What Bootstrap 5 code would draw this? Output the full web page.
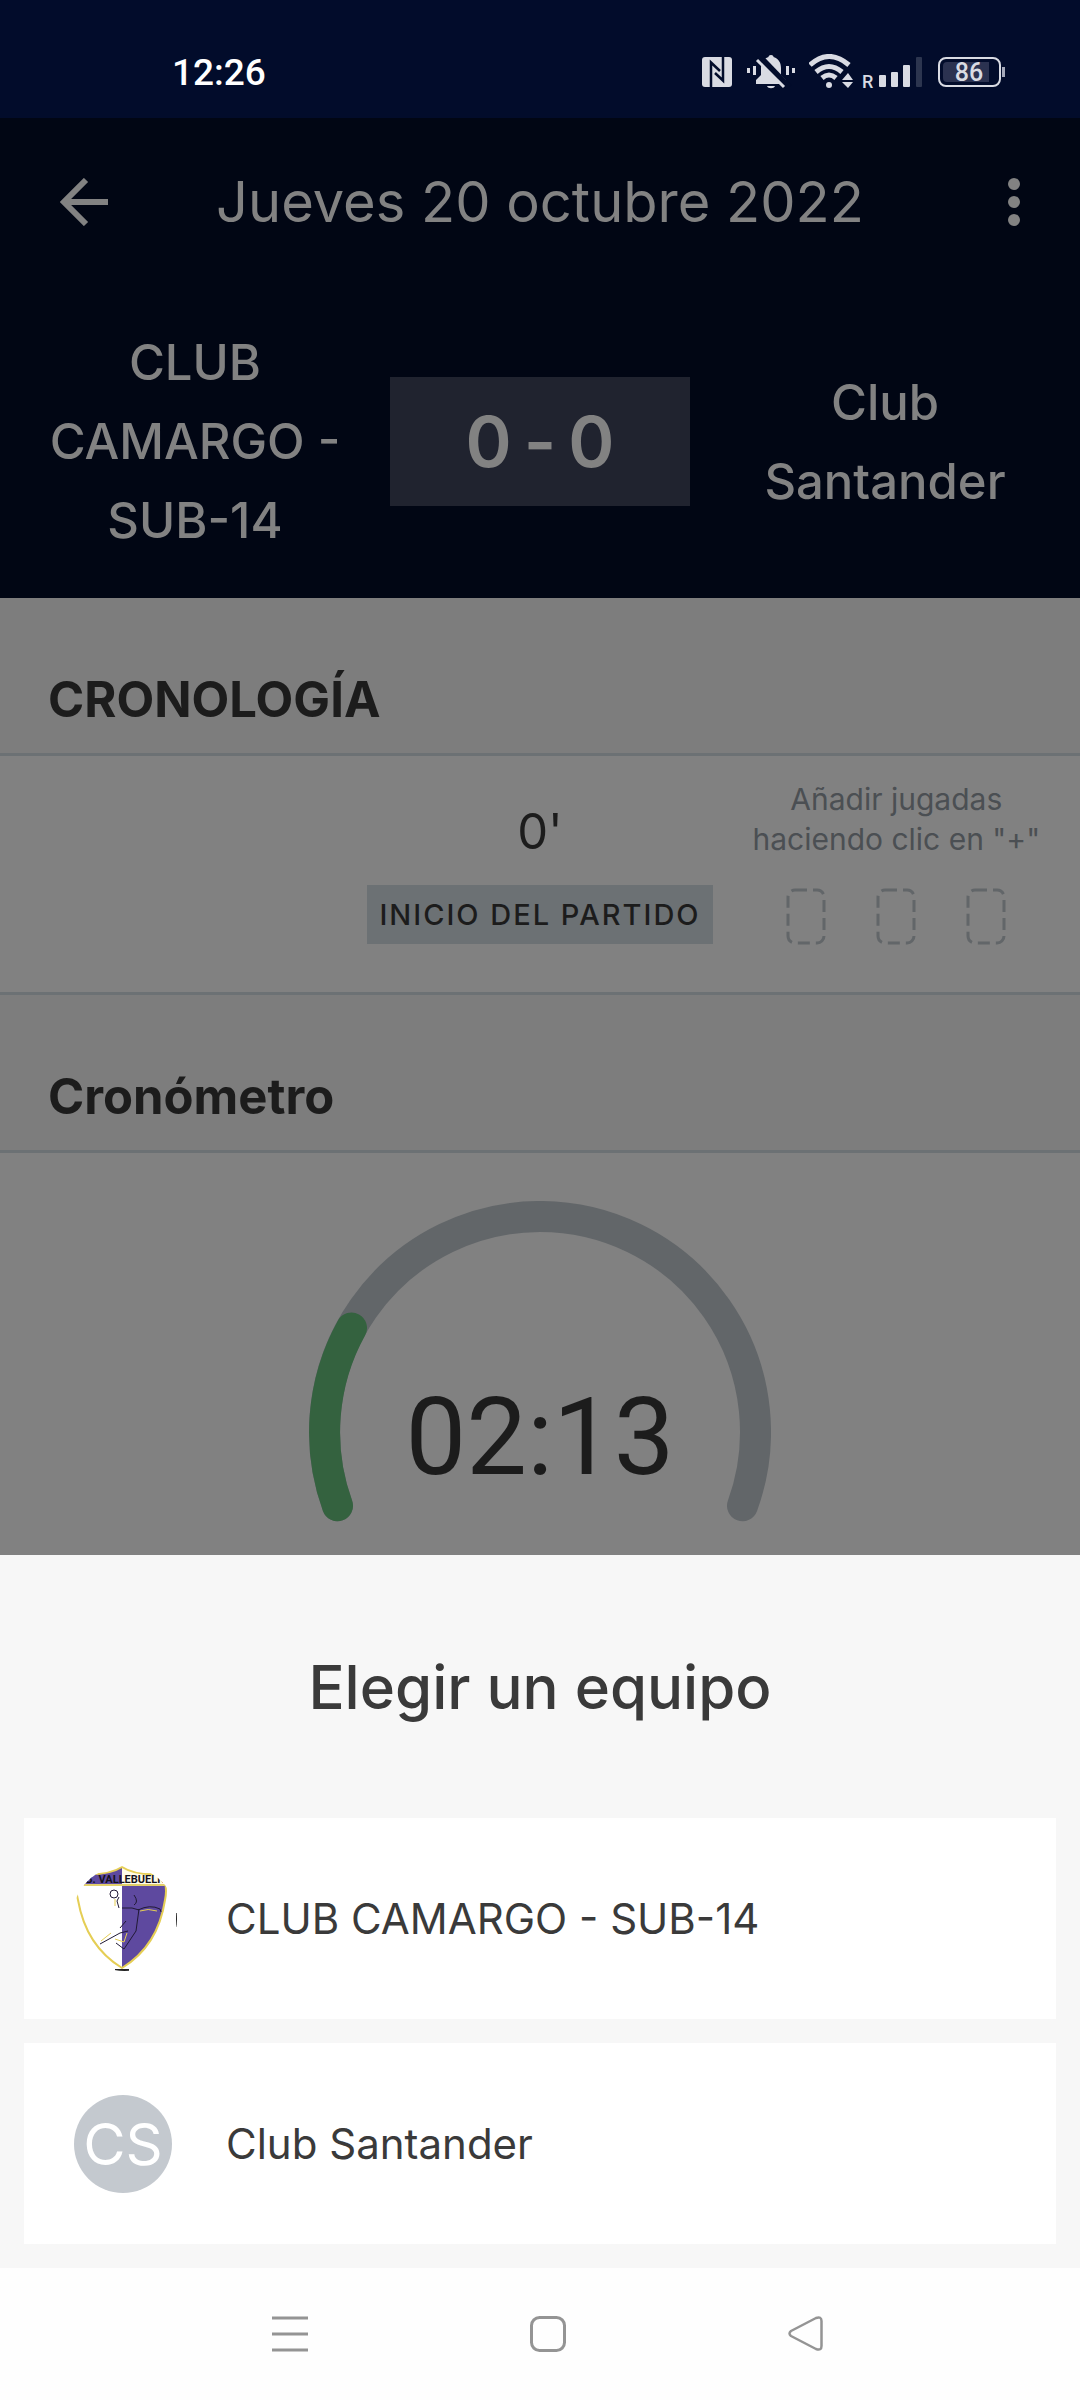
<!DOCTYPE html>
<html lang="es">
<head>
<meta charset="utf-8">
<meta name="viewport" content="width=device-width, initial-scale=1">
<title>Elegir un equipo</title>
<link href="https://cdn.jsdelivr.net/npm/bootstrap@5.3.0/dist/css/bootstrap.min.css" rel="stylesheet">
<style>
body{font-family:Inter,"Noto Sans",sans-serif;background:#f7f7f7;color:#3a3a3a}
button{background:none;border:0;padding:0;color:inherit}
svg{display:block;flex:none}
.statusbar{background:#020c2b;height:118px;padding:54px 75px 0 172px;color:#d9dbe3}
.clock{font:500 37px/38px Roboto,sans-serif;color:#fff}
.ic-nfc{margin-right:15px}
.ic-bell{margin-right:14px}
.ic-wifi{margin-right:9px}
.ic-signal{margin-right:16px}
.match-head{background:#010614;color:#828282}
.title-row{height:167px}
.side-btn{width:132px}
.back-btn{padding-left:60px}
.match-title{font-size:56px;line-height:80px;font-weight:400}
.teams{padding:38px 0}
.team-name{font-size:49px;line-height:79px;font-weight:500;padding:0 36px}
.score{width:300px;height:129px;background:#20232f;font-size:70px;font-weight:600;gap:12px}
.section-title{background:#7d7d7d;color:#1c1c1c;font-size:49px;line-height:60px;font-weight:700;padding:72px 48px 23px;border-bottom:3px solid #6c7174}
.timeline{background:#818181;color:#1c1c1c;padding:22px 0 47px;border-bottom:3px solid #6c7174}
.minute{font-size:49px;line-height:60px;padding-top:24px;margin-bottom:23px}
.event-tag{background:#6c7174;font-size:29px;line-height:59px;font-weight:500;letter-spacing:2px;padding:0 12px}
.hint{font-size:30px;line-height:40px;color:#4b4f53;margin-bottom:29px;padding-top:1px}
.slots{gap:50px}
.timer{background:#818181;padding-top:48px;height:402px}
.gauge{width:462px}
.sheet-title{font-size:60px;line-height:80px;font-weight:500;padding:92px 0 91px}
.team-list{padding:0 24px 24px;gap:24px}
.team-option{background:#fff;height:201px;padding-left:48px;font-size:42px;line-height:56px;text-align:left}
.pic-cell{width:154px}
.initials{width:98px;height:98px;margin-left:2px;background:#c4c9cf;color:#fff;font-size:58px;line-height:98px}
.navbar-sys{background:#fefefe;height:132px;padding:48px 256px 0 272px}
</style>
</head>
<body>
<div class="statusbar d-flex justify-content-between align-items-start">
  <div class="clock">12:26</div>
  <div class="d-flex">
    <svg class="ic-nfc" width="30" height="34" viewBox="0 0 30 34"><rect y="3" width="30" height="30" rx="3" fill="#d9dbe3"/><path d="M9 33V8.500L18 17M21 3V26.500L13 19" fill="none" stroke="#020c2b" stroke-width="2.500"/></svg>
    <svg class="ic-bell" width="48" height="35" viewBox="0 0 48 35"><g fill="#d9dbe3"><path d="M24 1c2 0 2.500 1 2.500 2C32 5 34 9 34 14v7l5 5v4H9v-4l5-5v-7c0-5 2-9 7.500-11C21.500 2 22 1 24 1zM20 32h8c-1 3-7 3-8 0z"/><path d="M6 12h3v9H6zM0 14h3v5H0zM39 12h3v9h-3zM45 14h3v5h-3z"/></g><path d="M12 2 42 33" stroke="#020c2b" stroke-width="6"/><path d="M10 6 37 33" stroke="#d9dbe3" stroke-width="3"/></svg>
    <svg class="ic-wifi" width="44" height="35" viewBox="0 0 44 35"><g fill="none" stroke="#d9dbe3" stroke-width="5"><path d="M1 11Q20-6 40 11M7 18Q20 7 33 18M13 24Q20 18 27 24"/></g><circle cx="20" cy="31" r="3" fill="#d9dbe3"/><path d="M33 26l6-7 5 7zM33 28h11l-5 6z" fill="#d9dbe3"/></svg>
    <svg class="ic-signal" width="60" height="44" viewBox="0 0 60 44"><text x="0" y="34" font-family="Roboto,sans-serif" font-size="18" font-weight="500" fill="#d9dbe3">R</text><g fill="#d9dbe3"><rect x="17" y="21" width="7" height="12" rx="1"/><rect x="29" y="18" width="7" height="15" rx="1"/><rect x="41" y="11" width="7" height="22" rx="1"/><rect x="54" y="3" width="6" height="30" rx="1" opacity=".2"/></g></svg>
    <svg width="67" height="35" viewBox="0 0 67 35"><rect x="1" y="4" width="61" height="28" rx="7" fill="none" stroke="#d9dbe3" stroke-width="2"/><path d="M5 12a4 4 0 0 1 4-4h42v20H9a4 4 0 0 1-4-4z" fill="#2b3250"/><rect x="64" y="13" width="3" height="10" fill="#a5a9ba"/><text x="31" y="27" text-anchor="middle" font-family="Roboto,sans-serif" font-size="25" font-weight="500" fill="#d9dbe3">86</text></svg>
  </div>
</div>

<header class="match-head">
  <div class="title-row d-flex align-items-center">
    <button class="side-btn back-btn" aria-label="Volver"><svg width="48" height="48" viewBox="0 0 48 48" fill="none" stroke="#828282" stroke-width="6"><path d="M48 24H4M26 2 4 24l22 22"/></svg></button>
    <h1 class="match-title flex-grow-1 text-center m-0">Jueves 20 octubre 2022</h1>
    <button class="side-btn d-flex justify-content-center" aria-label="Más opciones"><svg width="12" height="48" viewBox="0 0 12 48" fill="#828282"><circle cx="6" cy="6" r="6"/><circle cx="6" cy="24" r="6"/><circle cx="6" cy="42" r="6"/></svg></button>
  </div>
  <div class="teams d-flex align-items-center text-center">
    <div class="team-name col">CLUB CAMARGO - SUB-14</div>
    <div class="score d-flex align-items-center justify-content-center"><span>0</span><span>-</span><span>0</span></div>
    <div class="team-name col">Club Santander</div>
  </div>
</header>

<main>
  <h2 class="section-title m-0">CRONOLOGÍA</h2>
  <div class="timeline d-flex text-center">
    <div class="col"></div>
    <div>
      <div class="minute">0'</div>
      <div class="event-tag">INICIO DEL PARTIDO</div>
    </div>
    <div class="col">
      <div class="hint">Añadir jugadas<br>haciendo clic en "+"</div>
      <div class="slots d-flex justify-content-center">
        <svg width="40" height="57" viewBox="0 0 40 57" fill="none" stroke="#626669" stroke-width="3" stroke-dasharray="12 6"><rect x="2" y="2" width="36" height="53" rx="7"/></svg>
        <svg width="40" height="57" viewBox="0 0 40 57" fill="none" stroke="#626669" stroke-width="3" stroke-dasharray="12 6"><rect x="2" y="2" width="36" height="53" rx="7"/></svg>
        <svg width="40" height="57" viewBox="0 0 40 57" fill="none" stroke="#626669" stroke-width="3" stroke-dasharray="12 6"><rect x="2" y="2" width="36" height="53" rx="7"/></svg>
      </div>
    </div>
  </div>
  <h2 class="section-title m-0">Cronómetro</h2>
  <div class="timer d-flex justify-content-center align-items-start">
    <svg class="gauge" viewBox="0 0 462 322" height="322" fill="none" stroke-width="31" stroke-linecap="round"><path d="M28.500 304.700A215.500 215.500 0 1 1 433.500 304.700" stroke="#626669"/><path d="M28.500 304.700A215.500 215.500 0 0 1 42.500 127" stroke="#34623f"/><text x="231" y="273" text-anchor="middle" font-family="Roboto,sans-serif" font-size="108" fill="#1c1c1c">02:13</text></svg>
  </div>
</main>

<section>
  <h2 class="sheet-title text-center m-0">Elegir un equipo</h2>
  <div class="team-list d-flex flex-column">
    <button class="team-option d-flex align-items-center">
      <span class="pic-cell"><svg width="105" height="105" viewBox="0 0 105 105">
        <defs><clipPath id="round"><circle cx="52.500" cy="52.500" r="52.500"/></clipPath><clipPath id="shield"><path d="M50 1Q36 10 8 8Q2 20 6 34Q14 80 50 102Q86 80 93 34Q96 20 90 8Q64 10 50 1z"/></clipPath></defs>
        <g clip-path="url(#round)">
          <g clip-path="url(#shield)"><path d="M0 0h50v19H0zM50 19h55v86H50z" fill="#5e499f"/><path d="M50 0h55v19H50z" fill="#fffbe8"/></g>
          <path d="M5 19H93" stroke="#e2cf6a" stroke-width="2"/>
          <path d="M50 1Q36 10 8 8Q2 20 6 34Q14 80 50 102Q86 80 93 34Q96 20 90 8Q64 10 50 1z" fill="none" stroke="#e5ce55" stroke-width="2"/>
          <text x="57" y="17" text-anchor="middle" font-family="Roboto,sans-serif" font-weight="700" font-size="11" fill="#15121c">B. VALLEBUELNA</text>
          <g fill="none" stroke="#211a35" stroke-width="1"><circle cx="42" cy="28" r="4"/><path d="M47 31l-2 4 2 7M50 42h10l7 2M62 29q5 7 0 10M66 44q12-6 22-1l1 3M67 43l-3 22-12 18-8-6M28 78l20-11 8-2M48 62l6-7"/></g>
          <g fill="none" stroke="#e5ce55" stroke-width="1"><path d="M43 33v7M68 45q8-3 17 0M29 75l10-8M43 73l9 3 3-9"/></g>
          <path d="M43 104h14M105 47v14" stroke="#222" stroke-width="2"/>
        </g></svg></span>
      <span>CLUB CAMARGO - SUB-14</span>
    </button>
    <button class="team-option d-flex align-items-center">
      <span class="pic-cell"><span class="initials d-block rounded-circle text-center">CS</span></span>
      <span>Club Santander</span>
    </button>
  </div>
</section>

<nav class="navbar-sys d-flex justify-content-between align-items-start" aria-label="Sistema">
  <button aria-label="Recientes"><svg width="36" height="36" viewBox="0 0 36 36" stroke="#949494" stroke-width="3"><path d="M0 2h36M0 18h36M0 34h36"/></svg></button>
  <button aria-label="Inicio"><svg width="36" height="36" viewBox="0 0 36 36" fill="none" stroke="#949494" stroke-width="3"><rect x="1.500" y="1.500" width="33" height="33" rx="8"/></svg></button>
  <button aria-label="Atrás"><svg width="36" height="36" viewBox="0 0 36 36" fill="none" stroke="#949494" stroke-width="2.500" stroke-linejoin="round"><path d="M3 15 28 2Q33.500 0 33.500 5V30Q33.500 35 28 33L3 20Q0 17.500 3 15z"/></svg></button>
</nav>
<script src="https://cdn.jsdelivr.net/npm/bootstrap@5.3.0/dist/js/bootstrap.bundle.min.js"></script>
</body>
</html>
